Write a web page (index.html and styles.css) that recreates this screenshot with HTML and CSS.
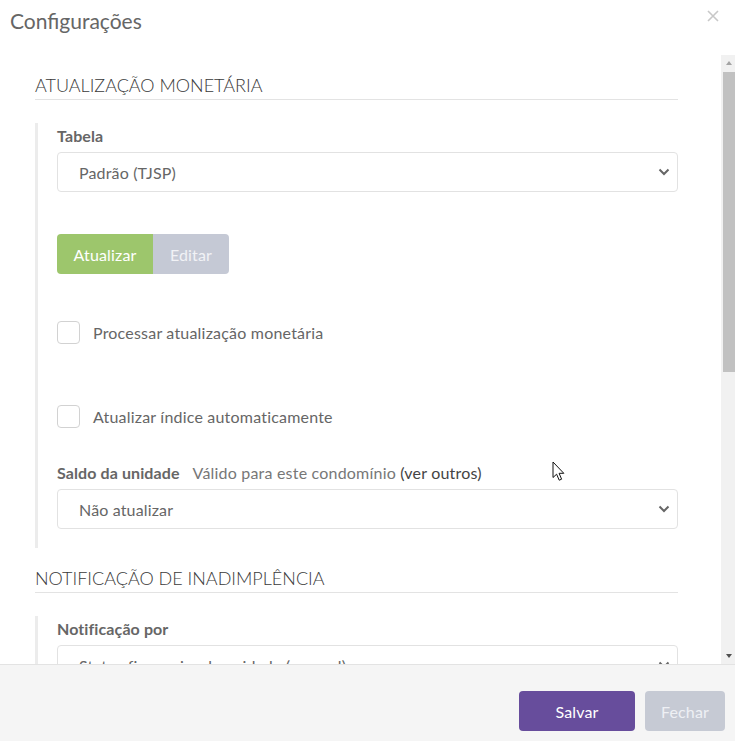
FILE: index.html
```html
<!DOCTYPE html>
<html lang="pt-BR">
<head>
<meta charset="utf-8">
<title>Configurações</title>
<link rel="stylesheet" href="styles.css">
</head>
<body>
<div class="modal">
  <div class="modal-header">
    <h1 class="modal-title">Configurações</h1>
    <button class="close" aria-label="Fechar">
      <svg width="12" height="12" viewBox="0 0 12 12"><path d="M1 1L11 11M11 1L1 11" stroke="#c8c8c8" stroke-width="1.6" fill="none"/></svg>
    </button>
  </div>
  <div class="modal-body">
    <div class="body-content">
      <section class="section">
        <h2 class="section-title">ATUALIZAÇÃO MONETÁRIA</h2>
        <div class="group">
          <div class="label">Tabela</div>
          <div class="select">
            <span>Padrão (TJSP)</span>
            <svg class="chev" width="12" height="8" viewBox="0 0 12 8"><path d="M1.5 1.5L6 6L10.5 1.5" stroke="#666" stroke-width="2" fill="none"/></svg>
          </div>
          <div class="btn-group">
            <button class="btn btn-green">Atualizar</button>
            <button class="btn btn-gray">Editar</button>
          </div>
          <label class="check check-1"><span class="box"></span><span>Processar atualização monetária</span></label>
          <label class="check check-2"><span class="box"></span><span>Atualizar índice automaticamente</span></label>
          <div class="label label-saldo">Saldo da unidade <span class="hint">Válido para este condomínio <span class="link">(ver outros)</span></span></div>
          <div class="select">
            <span>Não atualizar</span>
            <svg class="chev" width="12" height="8" viewBox="0 0 12 8"><path d="M1.5 1.5L6 6L10.5 1.5" stroke="#666" stroke-width="2" fill="none"/></svg>
          </div>
        </div>
      </section>
      <section class="section section-2">
        <h2 class="section-title">NOTIFICAÇÃO DE INADIMPLÊNCIA</h2>
        <div class="group">
          <div class="label">Notificação por</div>
          <div class="select">
            <span>Status financeiro da unidade (manual)</span>
            <svg class="chev" width="12" height="8" viewBox="0 0 12 8"><path d="M1.5 1.5L6 6L10.5 1.5" stroke="#666" stroke-width="2" fill="none"/></svg>
          </div>
        </div>
      </section>
    </div>
    <div class="scrollbar">
      <div class="sb-btn"><span class="tri-up"></span></div>
      <div class="sb-track">
        <div class="sb-thumb"></div>
      </div>
      <div class="sb-btn"><span class="tri-down"></span></div>
    </div>
  </div>
  <div class="modal-footer">
    <button class="btn btn-primary">Salvar</button>
    <button class="btn btn-close">Fechar</button>
  </div>
  <svg class="cursor" width="13" height="21" viewBox="0 0 13 21"><path d="M1 1L1 16.5L4.6 13.2L7.2 19.2L9.6 18.2L7.1 12.3L11.8 12.3Z" fill="#fff" stroke="#111" stroke-width="1" stroke-linejoin="round"/></svg>
</div>
</body>
</html>
```

FILE: styles.css
```css
* { box-sizing: border-box; }
html, body { margin: 0; padding: 0; background: #fff; }
body {
  font-family: Lato, "Noto Sans", sans-serif;
  color: #666;
  width: 735px;
  height: 741px;
  overflow: hidden;
}
.modal {
  position: relative;
  display: flex;
  flex-direction: column;
  height: 741px;
  background: #fff;
}
.modal-header {
  height: 55px;
  flex: none;
  display: flex;
  justify-content: space-between;
  align-items: flex-start;
  padding: 7px 16px 0 10px;
}
.modal-title {
  margin: 0;
  font-size: 21px;
  font-weight: 400;
  line-height: 28px;
  color: #666;
}
.close {
  border: 0;
  background: none;
  padding: 0;
  margin-top: 3px;
  cursor: pointer;
}
.modal-body {
  flex: 1;
  min-height: 0;
  display: flex;
  overflow: hidden;
}
.body-content {
  flex: 1;
  min-width: 0;
  overflow: hidden;
  padding: 16px 43px 0 35px;
}
.scrollbar {
  width: 14px;
  flex: none;
  background: #f1f1f1;
  display: flex;
  flex-direction: column;
}
.sb-btn {
  height: 16px;
  flex: none;
  display: flex;
  align-items: center;
  justify-content: center;
  padding-left: 2px;
}
.tri-up {
  width: 0; height: 0;
  border-left: 3.5px solid transparent;
  border-right: 3.5px solid transparent;
  border-bottom: 4px solid #a3a3a3;
}
.tri-down {
  width: 0; height: 0;
  border-left: 3.5px solid transparent;
  border-right: 3.5px solid transparent;
  border-top: 4px solid #505050;
}
.sb-track {
  flex: 1;
  padding: 1px 0 0 2px;
}
.sb-thumb {
  height: 300px;
  background: #c1c1c1;
}
.section-title {
  margin: 0;
  font-size: 18px;
  font-weight: 300;
  line-height: 28px;
  color: #3a3a3a;
  border-bottom: 1px solid #e3e3e3;
}
.group {
  margin-top: 23px;
  border-left: 3px solid #ececec;
  padding: 3px 0 19px 19px;
}
.section-2 { margin-top: 16px; }
.label {
  font-size: 16px;
  font-weight: 700;
  line-height: 20px;
  color: #666;
  margin-bottom: 6px;
  letter-spacing: 0.1px;
}
.hint { font-weight: 400; color: #777; margin-left: 9px; letter-spacing: 0.2px; }
.link { color: #444; }
.select {
  height: 40px;
  border: 1px solid #e2e2e2;
  border-radius: 4px;
  display: flex;
  align-items: center;
  justify-content: space-between;
  padding: 0 7px 0 21px;
  font-size: 16px;
  color: #666;
  background: #fff;
  letter-spacing: 0.15px;
}
.btn-group {
  display: flex;
  margin-top: 42px;
}
.btn {
  height: 40px;
  border: 0;
  font-family: Lato, "Noto Sans", sans-serif;
  font-size: 16px;
  color: #fff;
  padding: 0;
  cursor: pointer;
  letter-spacing: 0.15px;
}
.btn-green {
  background: #9dc66c;
  border-radius: 4px 0 0 4px;
  width: 96px;
}
.btn-gray {
  background: #c5c9d5;
  color: #f1f2f6;
  border-radius: 0 4px 4px 0;
  width: 76px;
}
.check {
  display: flex;
  align-items: center;
  gap: 13px;
  font-size: 16px;
  color: #666;
  height: 23px;
  letter-spacing: 0.2px;
}
.check-1 { margin-top: 47px; }
.check-2 { margin-top: 61px; }
.check-2 + .label { margin-top: 35px; }
.box {
  width: 23px;
  height: 23px;
  border: 1px solid #d2d2d2;
  border-radius: 4px;
  background: #fff;
}
.modal-footer {
  height: 77px;
  flex: none;
  background: #f5f5f5;
  border-top: 1px solid #e3e3e3;
  display: flex;
  justify-content: flex-end;
  align-items: flex-start;
  gap: 10px;
  padding: 26px 10px 0 0;
}
.btn-primary {
  background: #674d9c;
  width: 116px;
  border-radius: 4px;
}
.btn-close {
  background: #c6cad4;
  color: #eef0f4;
  width: 80px;
  border-radius: 4px;
}
.cursor {
  position: absolute;
  left: 552px;
  top: 461px;
  pointer-events: none;
}
```
